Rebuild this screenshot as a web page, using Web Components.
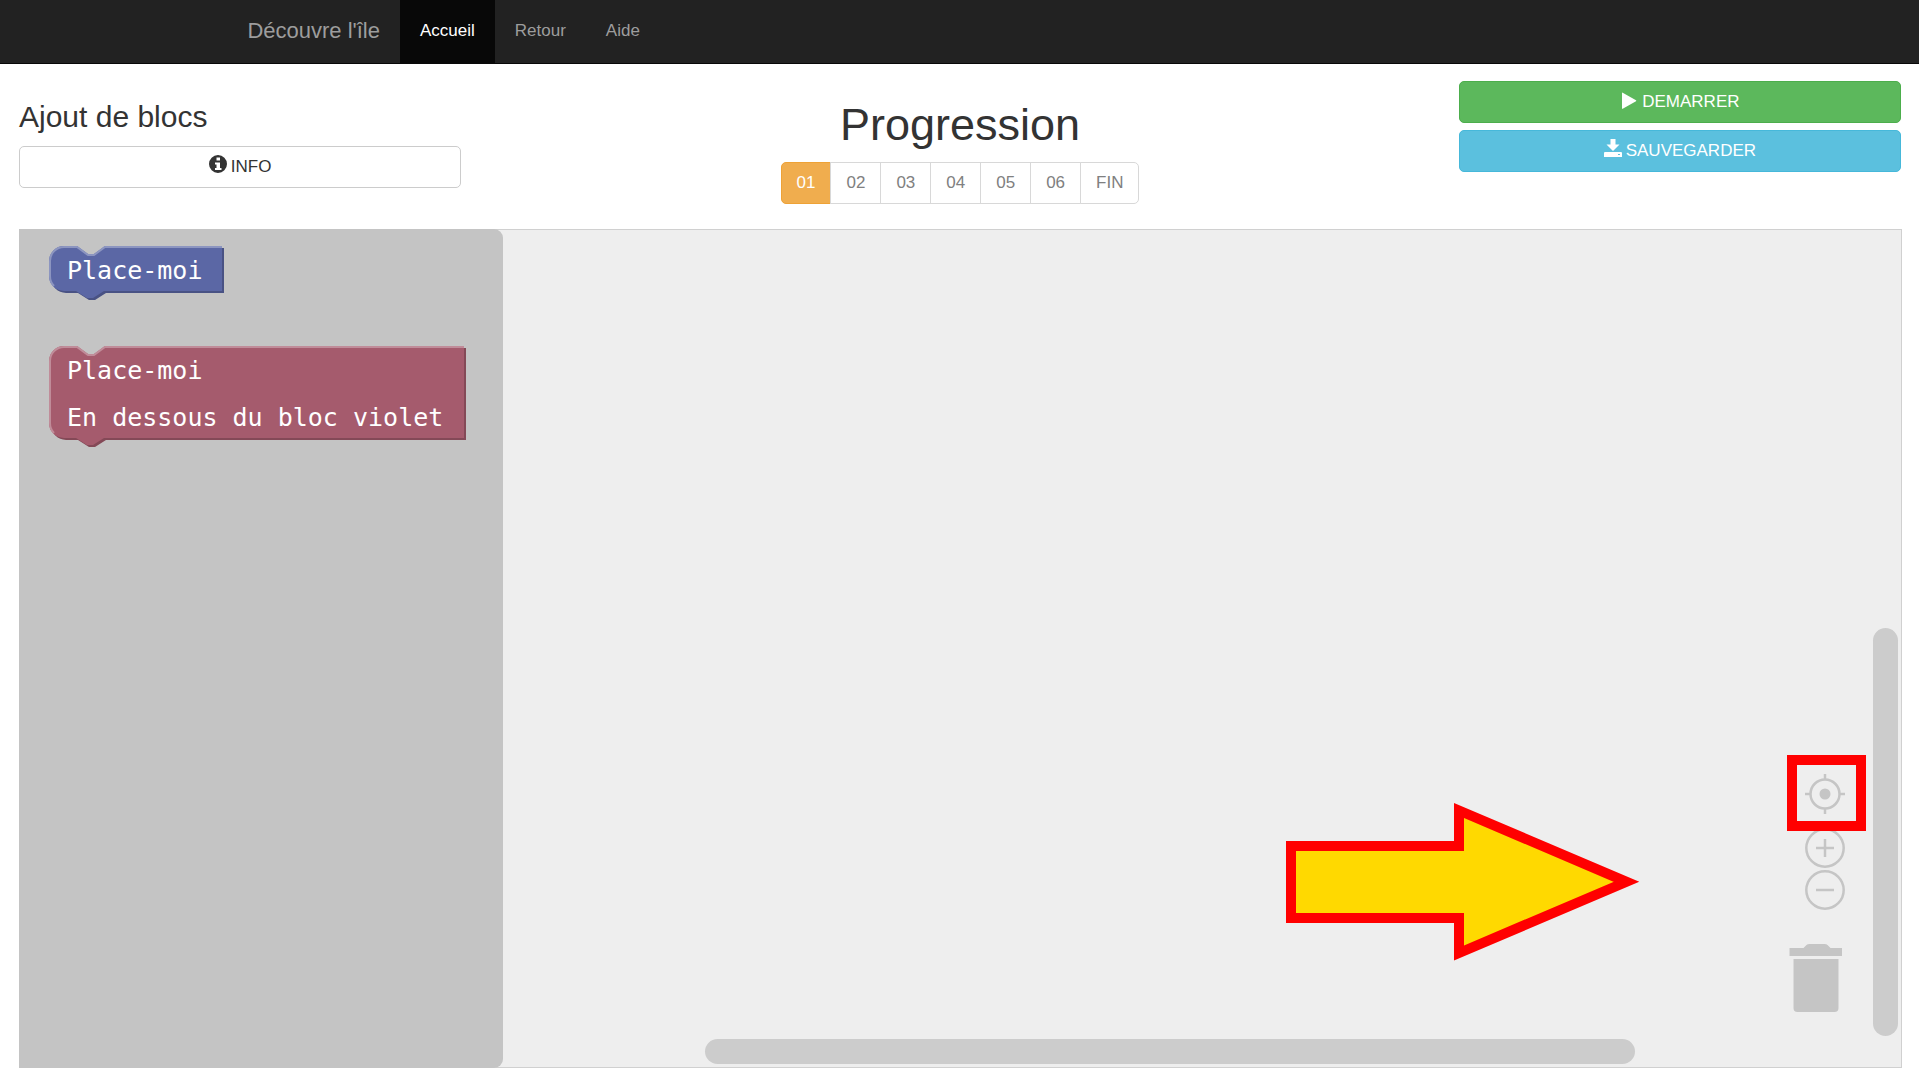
<!DOCTYPE html>
<html lang="fr">
<head>
<meta charset="utf-8">
<title>Découvre l'île</title>
<style>
  html, body { margin: 0; height: 100%; }
  body { font-family: "Liberation Sans", Arial, sans-serif; font-size: 17px; line-height: 24px; color: #333; background: #fff; }
</style>
</head>
<body>
<island-app></island-app>

<template id="t-app">
  <style>
    :host { display: flex; flex-direction: column; min-height: 100vh; }
    header { display: grid; grid-template-columns: 23.5% 1fr 23.5%; column-gap: 37px; align-items: start; padding: 17px 18px 25px 19px; }
    h1, h2 { font-weight: normal; margin: 19px 0 13px; }
    h1 { font-size: 45px; line-height: 49px; }
    h2 { font-size: 30px; line-height: 33px; }
    .mid { display: flex; flex-direction: column; align-items: center; }
    .actions { display: flex; flex-direction: column; gap: 7px; }
    main { flex: 1; display: flex; margin: 0 17px 11px 19px; }
  </style>
  <top-nav></top-nav>
  <header>
    <div><h2>Ajout de blocs</h2><wide-button kind="default" icon="info">INFO</wide-button></div>
    <div class="mid"><h1>Progression</h1><step-group></step-group></div>
    <div class="actions">
      <wide-button kind="success" icon="play">DEMARRER</wide-button>
      <wide-button kind="info" icon="save">SAUVEGARDER</wide-button>
    </div>
  </header>
  <main><block-workspace></block-workspace></main>
</template>

<template id="t-nav">
  <style>
    :host { display: block; background: #222; border-bottom: 1px solid #080808; }
    nav { display: flex; width: 76.3%; margin: 0 auto; height: 63px; }
    a { display: flex; align-items: center; padding: 0 20px 1px; color: #9d9d9d; text-decoration: none; }
    .brand { font-size: 22px; }
    .active { color: #fff; background: #080808; }
  </style>
  <nav>
    <a class="brand" href="#">Découvre l'île</a>
    <a class="active" href="#">Accueil</a>
    <a href="#">Retour</a>
    <a href="#">Aide</a>
  </nav>
</template>

<template id="t-steps">
  <style>
    :host { display: flex; }
    button { font: inherit; color: #808080; background: #fff; border: 1px solid #d8d8d8; padding: 8px 15px 9px; margin: 0 0 0 -1px; line-height: 23px; height: 42px; }
    button:first-of-type { margin: 0; color: #fff; background: #f0ad4e; border-color: #eea236; border-radius: 5px 0 0 5px; }
    button:last-of-type { border-radius: 0 5px 5px 0; }
  </style>
  <button>01</button><button>02</button><button>03</button><button>04</button><button>05</button><button>06</button><button>FIN</button>
</template>

<template id="t-workspace">
  <style>
    :host { flex: 1; display: flex; position: relative; background: #eee; border: 1px solid #d0d0d0; }
    aside { box-sizing: border-box; width: 484px; margin: -1px 0 -1px -1px; padding: 17px 30px; background: #c4c4c4; border-radius: 0 9px 9px 0; display: flex; flex-direction: column; align-items: flex-start; gap: 44px; }
    .bar { position: absolute; background: #ccc; border-radius: 13px; }
    .v { right: 3px; bottom: 31px; width: 25px; height: 408px; }
    .h { right: 266px; bottom: 3px; width: 930px; height: 25px; }
    .controls { position: absolute; right: 56px; bottom: 55px; display: flex; flex-direction: column; align-items: flex-end; gap: 2px; }
    button { display: block; padding: 0; border: 0; background: none; }
    svg { display: block; }
    .target { margin-bottom: 12px; }
    .trash { margin-top: 32px; }
    .frame { position: absolute; box-sizing: border-box; right: 35px; bottom: 236px; width: 79px; height: 76px; border: 10px solid #f00; pointer-events: none; }
    .arrow { position: absolute; right: 260px; bottom: 105px; }
  </style>
  <aside>
    <code-block width="173" height="45" fill="#5b67a5" light="#8c95c0" dark="#495284">Place-moi</code-block>
    <code-block width="415" height="92" fill="#a55b6d" light="#c08c99" dark="#844957">Place-moi<br>En dessous du bloc violet</code-block>
  </aside>
  <div class="bar v"></div>
  <div class="bar h"></div>
  <div class="controls">
    <button class="target" aria-label="Centrer"><svg width="40" height="40" fill="none" stroke="#c5c5c5" stroke-width="2.500"><circle cx="20" cy="20" r="14.500"/><path d="M20 0v6M20 34v6M0 20h6M34 20h6"/><circle cx="20" cy="20" r="5.500" fill="#c5c5c5" stroke="none"/></svg></button>
    <button aria-label="Agrandir"><svg width="40" height="40" fill="none" stroke="#c5c5c5" stroke-width="2.500"><circle cx="20" cy="20" r="18.700"/><path d="M11 20h18M20 11v18"/></svg></button>
    <button aria-label="Réduire"><svg width="40" height="40" fill="none" stroke="#c5c5c5" stroke-width="2.500"><circle cx="20" cy="20" r="18.700"/><path d="M11 20h18"/></svg></button>
    <button class="trash" aria-label="Corbeille"><svg width="56" height="68" fill="#c5c5c5"><path d="M0.500 4h14l3-3q1-1 3-1h15q2 0 3 1l3 3h11.500v8H0.500zM4.500 15h45v49q0 4-4 4H8.500q-4 0-4-4z"/></svg></button>
  </div>
  <div class="frame"></div>
  <svg class="arrow" width="356" height="160" aria-hidden="true"><path d="M6 44H174V8.500L341.500 79.800L174 151V116H6Z" fill="#ffd900" stroke="#f00" stroke-width="10" stroke-miterlimit="10"/></svg>
</template>

<script>
  const stamp = (host, id) => {
    host.attachShadow({ mode: 'open' }).append(document.getElementById(id).content.cloneNode(true));
  };
  const ICONS = {
    info: '<path fill-rule="evenodd" d="M9 0a9 9 0 1 0 0 18A9 9 0 0 0 9 0zM7.500 2.500h3.500v3H7.500zM6 7.500h5v5.500h1.500v2H6v-2h1.500V9.500H6z"/>',
    play: '<path d="M2 3.200Q2 2.300 2.700 2.700L16 10.200q.6.500 0 1L2.700 18.700Q2 19 2 18.400z"/>',
    save: '<path fill-rule="evenodd" d="M6.500 0h5v5.500h4L9 12 2.500 5.500h4zM1 13h16q1 0 1 1v4H0v-4q0-1 1-1zM14 15v1h2v-1z"/>'
  };

  customElements.define('top-nav', class extends HTMLElement {
    constructor() { super(); stamp(this, 't-nav'); }
  });

  customElements.define('wide-button', class extends HTMLElement {
    connectedCallback() {
      if (this.shadowRoot) return;
      const [color, bg, border] = {
        default: ['#333', '#fff', '#ccc'],
        success: ['#fff', '#5cb85c', '#4cae4c'],
        info: ['#fff', '#5bc0de', '#46b8da']
      }[this.getAttribute('kind')];
      this.attachShadow({ mode: 'open' }).innerHTML = `
        <style>
          :host { display: block; }
          button { display: flex; justify-content: center; gap: 4px; width: 100%; box-sizing: border-box; font: inherit; line-height: 24px;
            padding: 8px 15px; height: 42px; align-items: flex-start; margin: 0; border-radius: 5px; border: 1px solid ${border}; background: ${bg}; color: ${color}; }
          svg { display: block; fill: currentColor; }
        </style>
        <button><svg width="18" height="20" viewBox="0 0 18 20">${ICONS[this.getAttribute('icon')]}</svg><span><slot></slot></span></button>`;
    }
  });

  customElements.define('step-group', class extends HTMLElement {
    constructor() { super(); stamp(this, 't-steps'); }
  });

  customElements.define('code-block', class extends HTMLElement {
    connectedCallback() {
      if (this.shadowRoot) return;
      const w = +this.getAttribute('width'), h = +this.getAttribute('height');
      const fill = this.getAttribute('fill'), light = this.getAttribute('light'), dark = this.getAttribute('dark');
      const shape = `M0 15A15 15 0 0 1 15 0H28L39 8H45L56 0H${w}V${h}H55L44 ${h + 7}H38L27 ${h}H15A15 15 0 0 1 0 ${h - 15}Z`;
      this.attachShadow({ mode: 'open' }).innerHTML = `
        <style>
          :host { display: block; position: relative; width: ${w + 2}px; padding: 1px 0 8px; color: #fff;
            font: 25px/47px "DejaVu Sans Mono", monospace; white-space: nowrap; }
          svg { position: absolute; inset: 0; }
          .label { position: relative; padding-left: 18px; }
        </style>
        <svg width="${w + 2}" height="${h + 10}" aria-hidden="true">
          <path d="${shape}" fill="${dark}" transform="translate(2 2)"/>
          <path d="${shape}" fill="${fill}"/>
          <path d="M5 ${h - 5}Q1 ${h - 9} 1 ${h - 15}V15A14 14 0 0 1 15 1H28L39 9H45L56 1H${w}" fill="none" stroke="${light}" stroke-width="2"/>
        </svg>
        <div class="label"><slot></slot></div>`;
    }
  });

  customElements.define('block-workspace', class extends HTMLElement {
    constructor() { super(); stamp(this, 't-workspace'); }
  });

  customElements.define('island-app', class extends HTMLElement {
    constructor() { super(); stamp(this, 't-app'); }
  });
</script>
</body>
</html>
